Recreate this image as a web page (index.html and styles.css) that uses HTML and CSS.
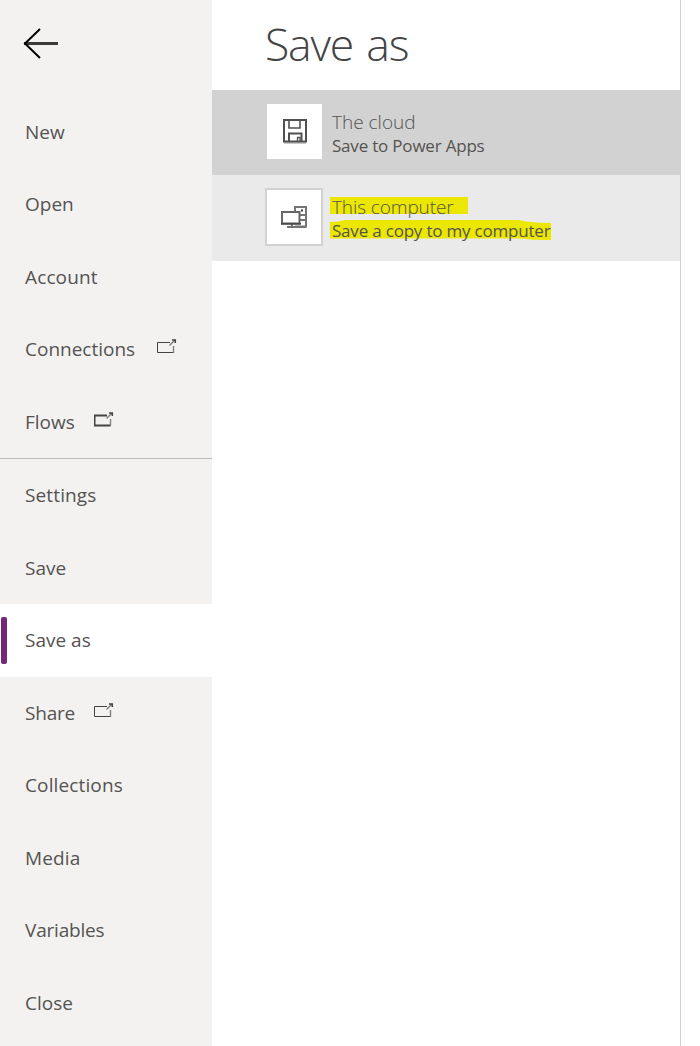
FILE: index.html
```html
<!DOCTYPE html>
<html lang="en">
<head>
<meta charset="utf-8">
<title>Save as</title>
<link rel="stylesheet" href="styles.css">
</head>
<body>
<svg class="defs" aria-hidden="true">
  <symbol id="external" viewBox="0 0 20 16">
    <path d="M13 4.500H.5V14.500H16.500" fill="none" stroke="currentColor"/>
    <path d="M16.500 15V8" fill="none" stroke="#807f7e" stroke-width="1.400"/>
    <path d="M12.500 7.500L18 2" fill="none" stroke="#807f7e" stroke-width="1.400"/>
    <path d="M15 2H18.300V5" fill="none" stroke="currentColor" stroke-width="1.500"/>
  </symbol>
</svg>
<div class="app">
  <nav class="sidebar">
    <button class="back" aria-label="Back">
      <svg width="36" height="32" viewBox="0 0 36 32"><path d="M1 15.500H35" stroke="#3b3a39" stroke-width="2.800"/><path d="M17 1L2 15.500L17 30" fill="none" stroke="#000" stroke-width="2"/></svg>
    </button>
    <a class="item"><span>New</span></a>
    <a class="item"><span>Open</span></a>
    <a class="item"><span class="loose">Account</span></a>
    <a class="item"><span>Connections</span><svg class="ext ext-connections"><use href="#external"/></svg></a>
    <a class="item"><span>Flows</span><svg class="ext ext-bold"><use href="#external"/></svg></a>
    <div class="divider"></div>
    <a class="item"><span class="loose">Settings</span></a>
    <a class="item"><span>Save</span></a>
    <a class="item selected"><span>Save as</span></a>
    <a class="item"><span class="tight">Share</span><svg class="ext"><use href="#external"/></svg></a>
    <a class="item"><span class="loose">Collections</span></a>
    <a class="item"><span class="loose">Media</span></a>
    <a class="item"><span class="tight">Variables</span></a>
    <a class="item"><span>Close</span></a>
  </nav>
  <main class="panel">
    <h1>Save as</h1>
    <div class="option cloud">
      <div class="tile">
        <svg width="24" height="25" viewBox="0 0 24 25" fill="none" stroke="#505050">
          <path d="M1 24H23" stroke="#c8c8c8" stroke-width="2"/>
          <path d="M1 1H23V22.500H1Z" stroke-width="2"/>
          <path d="M6 2V9H17V2" stroke-width="1.600"/>
          <path d="M6 22V14.500H18.500V22" stroke-width="2"/>
          <path d="M14.500 22V18.500H17V22" stroke-width="1.300"/>
        </svg>
      </div>
      <div class="labels"><div class="name">The cloud</div><div class="detail">Save to Power Apps</div></div>
    </div>
    <div class="option computer">
      <div class="tile">
        <svg width="26" height="24" viewBox="0 0 26 24" fill="none" stroke="#747474">
          <path d="M14 6V2H25V21.500H14M19 10H25M19 15H25" stroke-width="2"/>
          <path d="M6 22H25M11 18V22" stroke-width="2"/>
          <path d="M1 7H18.500V18.500H1Z" fill="#fff" stroke="#666" stroke-width="2"/>
          <path d="M0 18.800H20" stroke="#4a4a4a" stroke-width="1.700"/>
          <path d="M20 5.500H22" stroke="#333" stroke-width="2"/>
        </svg>
      </div>
      <div class="labels">
        <svg class="marker" width="224" height="48" viewBox="0 0 224 48" fill="#ebe700"><path d="M0 0H138V17H0ZM0 25Q8 25 16 23H188Q201 26 221 26V43Q205 43 188 41.500H0Z"/></svg>
        <div class="name">This computer</div><div class="detail">Save a copy to my computer</div>
      </div>
    </div>
  </main>
</div>
</body>
</html>
```
FILE: styles.css
```css
* { box-sizing: border-box; }
body { margin: 0; background: #fff; color: #555351; font-family: "Open Sans", "Noto Sans", sans-serif; }
.defs { position: absolute; width: 0; height: 0; }
.app { display: flex; width: 681px; height: 1046px; border-right: 1px solid #d2d2d2; overflow: hidden; }
.sidebar { flex: 0 0 212px; background: #f3f2f1; }
.back { display: block; height: 95.5px; width: 100%; padding: 28px 0 35px 23px; border: 0; background: none; text-align: left; }
.back svg { display: block; }
.item { display: flex; align-items: center; height: 72.5px; padding: 0 0 0 25px; font-size: 19px; line-height: 26px; white-space: nowrap; }
.loose { letter-spacing: 0.13px; }
.tight { letter-spacing: -0.2px; }
.divider { height: 1px; background: #bdbcbb; }
.selected { position: relative; background: #fff; }
.selected::before { content: ""; position: absolute; left: 1px; top: 13px; width: 6px; height: 47px; border-radius: 2px; background: #742774; }
.ext { width: 20px; height: 16px; margin: -6px 0 0 19px; color: #454341; }
.ext-connections { margin-left: 22px; }
.ext-bold { stroke-width: 2px; }
.panel { flex: 1; }
h1 { margin: 0; height: 90px; padding: 12px 0 0 53px; font-size: 44.5px; line-height: 64px; font-weight: 300; letter-spacing: -1.2px; word-spacing: 3px; color: #444; white-space: nowrap; }
.option { display: flex; padding: 13px 0 0 53px; }
.cloud { height: 85px; padding: 14px 0 0 55px; background: #d2d2d2; }
.computer { height: 86px; background: #eaeaea; }
.tile { width: 58px; height: 58px; display: flex; align-items: center; justify-content: center; background: #fff; border: 2px solid #d2d2d2; }
.cloud .tile { width: 55px; height: 55px; border: 0; }
.labels { position: relative; padding: 7px 0 0 9px; white-space: nowrap; }
.cloud .labels { padding: 6px 0 0 10px; }
.name, .detail { position: relative; height: 24px; line-height: 24px; }
.name { font-size: 19px; font-weight: 300; }
.computer .name { letter-spacing: -0.1px; }
.detail { font-size: 17px; letter-spacing: -0.2px; }
.marker { position: absolute; left: 7px; top: 9px; }
```
